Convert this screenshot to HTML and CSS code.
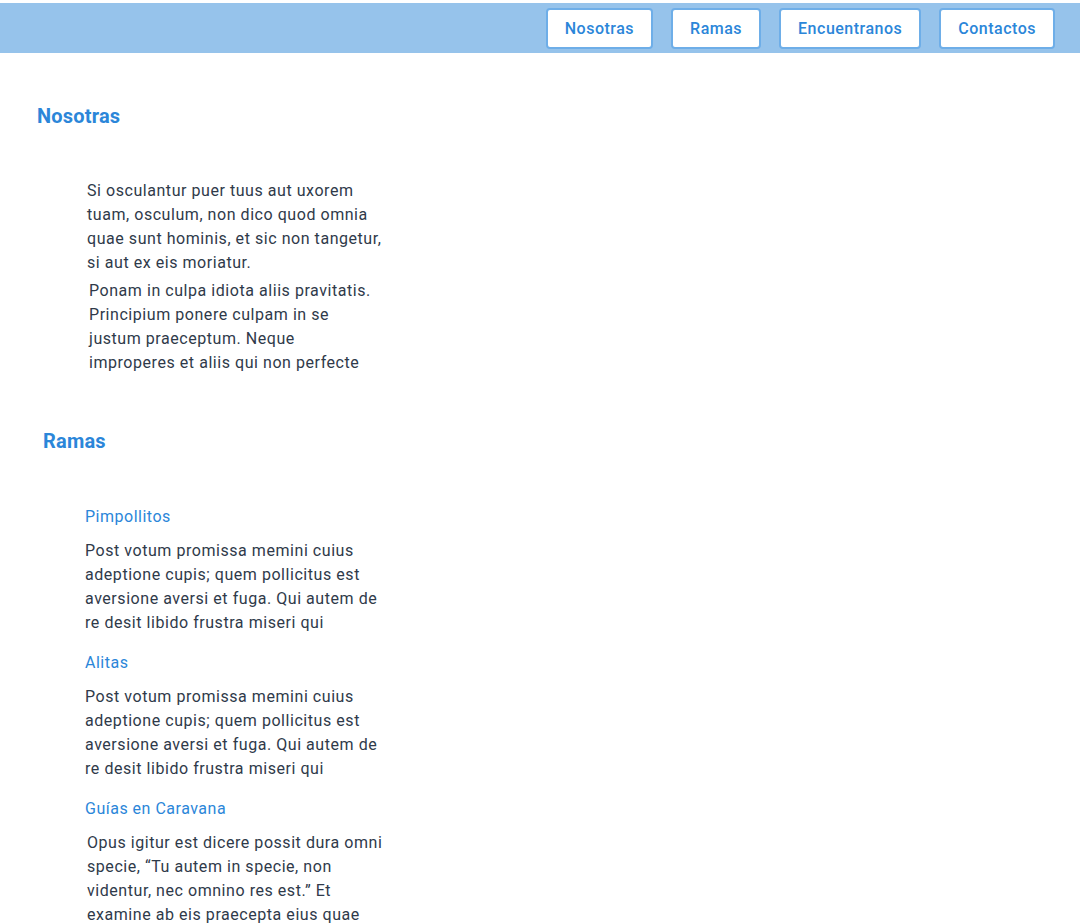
FILE: index.html
```html
<!DOCTYPE html>
<html lang="es">
<head>
<meta charset="utf-8">
<title>Nosotras</title>
<link rel="stylesheet" href="styles.css">
</head>
<body>
<header class="topbar">
  <nav class="nav">
    <a class="nav-btn" href="#nosotras">Nosotras</a>
    <a class="nav-btn" href="#ramas">Ramas</a>
    <a class="nav-btn" href="#encuentranos">Encuentranos</a>
    <a class="nav-btn" href="#contactos">Contactos</a>
  </nav>
</header>
<main class="content">
  <section class="section section-nosotras" id="nosotras">
    <h2 class="section-title">Nosotras</h2>
    <div class="text-block">
      <p class="para">Si osculantur puer tuus aut uxorem tuam, osculum, non dico quod omnia quae sunt hominis, et sic non tangetur, si aut ex eis moriatur.</p>
      <p class="para para-shift">Ponam in culpa idiota aliis pravitatis. Principium ponere culpam in se justum praeceptum. Neque improperes et aliis qui non perfecte</p>
    </div>
  </section>
  <section class="section section-ramas" id="ramas">
    <h2 class="section-title title-shift">Ramas</h2>
    <div class="branches">
      <article class="branch">
        <h3 class="branch-title">Pimpollitos</h3>
        <p class="para">Post votum promissa memini cuius adeptione cupis; quem pollicitus est aversione aversi et fuga. Qui autem de re desit libido frustra miseri qui</p>
      </article>
      <article class="branch">
        <h3 class="branch-title">Alitas</h3>
        <p class="para">Post votum promissa memini cuius adeptione cupis; quem pollicitus est aversione aversi et fuga. Qui autem de re desit libido frustra miseri qui</p>
      </article>
      <article class="branch">
        <h3 class="branch-title">Guías en Caravana</h3>
        <p class="para para-shift">Opus igitur est dicere possit dura omni specie, “Tu autem in specie, non videntur, nec omnino res est.” Et examine ab eis praecepta eius quae</p>
      </article>
    </div>
  </section>
</main>
</body>
</html>
```

FILE: styles.css
```css
* { box-sizing: border-box; }

body {
  margin: 0;
  background: #ffffff;
  font-family: Roboto, "Noto Sans", sans-serif;
  color: #2f3a4a;
}

.topbar {
  margin-top: 3px;
  height: 50px;
  background: #96c3eb;
  display: flex;
  justify-content: flex-end;
  align-items: center;
  padding-right: 25px;
}

.nav {
  display: flex;
  gap: 18px;
  align-items: center;
}

.nav-btn {
  display: flex;
  align-items: center;
  justify-content: center;
  height: 41px;
  padding: 0 17px;
  background: #ffffff;
  border: 2px solid #6eaee8;
  border-radius: 4px;
  color: #2b86d9;
  font-size: 16px;
  font-weight: 500;
  letter-spacing: 0.5px;
  text-decoration: none;
}

.content {
  padding-left: 37px;
}

.section-title {
  margin: 0;
  font-size: 20px;
  line-height: 24px;
  font-weight: 700;
  letter-spacing: 0.2px;
  color: #2b86d9;
}

.section-nosotras {
  padding-top: 51px;
}

.section-ramas {
  padding-top: 54px;
}

.title-shift {
  margin-left: 6px;
}

.text-block {
  margin-top: 51px;
  margin-left: 50px;
  width: 302px;
  display: flex;
  flex-direction: column;
  gap: 4px;
}

.para {
  margin: 0;
  font-size: 16px;
  line-height: 24px;
  letter-spacing: 0.55px;
}

.text-block .para-shift {
  margin-left: 2px;
  margin-right: 8px;
}

.branches {
  margin-top: 52px;
  margin-left: 48px;
  width: 302px;
  display: flex;
  flex-direction: column;
  gap: 16px;
}

.branches .para-shift {
  margin-left: 2px;
}

.branch {
  display: flex;
  flex-direction: column;
  gap: 10px;
}

.branch-title {
  margin: 0;
  font-size: 16px;
  line-height: 24px;
  font-weight: 400;
  letter-spacing: 0.5px;
  color: #2b86d9;
}
```
